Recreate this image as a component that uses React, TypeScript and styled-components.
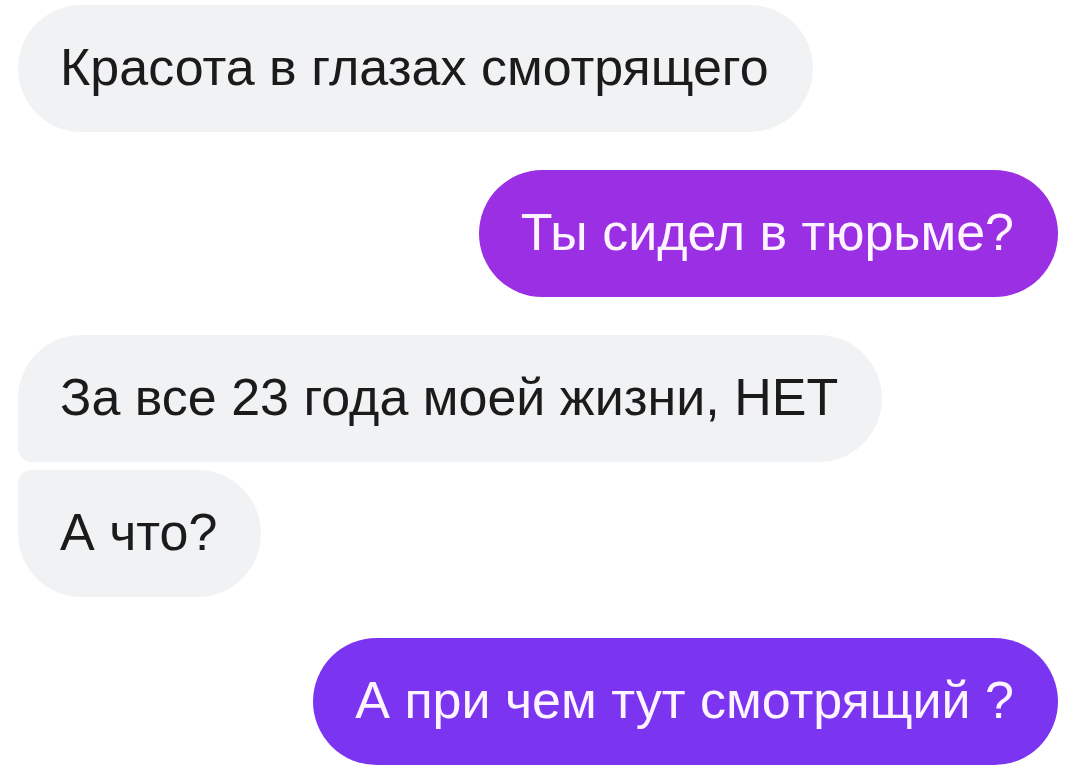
import styled, { createGlobalStyle } from "styled-components";

const Global = createGlobalStyle`
  html, body {
    margin: 0;
    background: #ffffff;
  }
  body {
    font-family: "Liberation Sans", Arial, sans-serif;
  }
`;

const Chat = styled.div`
  display: flex;
  flex-direction: column;
  padding: 5px 22px 0 18px;
  width: 1080px;
  height: 773px;
  box-sizing: border-box;
  overflow: hidden;
`;

const Group = styled.div<{ $mine?: boolean; $space?: number }>`
  display: flex;
  flex-direction: column;
  align-items: ${(p) => (p.$mine ? "flex-end" : "flex-start")};
  gap: 8px;
  margin-bottom: ${(p) => p.$space ?? 38}px;
`;

type Pos = "single" | "first" | "last";

const radius = (pos: Pos) => {
  if (pos === "first") return "64px 64px 64px 14px";
  if (pos === "last") return "14px 64px 64px 64px";
  return "64px";
};

const Bubble = styled.div<{ $mine?: boolean; $tone?: string; $pos?: Pos }>`
  display: flex;
  align-items: center;
  height: 127px;
  box-sizing: border-box;
  padding: 0 44px 4px 42px;
  border-radius: ${(p) => radius(p.$pos || "single")};
  background: ${(p) => (p.$mine ? p.$tone : "#f1f2f4")};
  color: ${(p) => (p.$mine ? "#fdf4ff" : "#1b1b1b")};
  font-size: 52px;
  white-space: nowrap;
`;

export default function App() {
  return (
    <>
      <Global />
      <Chat>
        <Group>
          <Bubble>Красота в глазах смотрящего</Bubble>
        </Group>
        <Group $mine>
          <Bubble $mine $tone="#9a2fe3">
            Ты сидел в тюрьме?
          </Bubble>
        </Group>
        <Group $space={41}>
          <Bubble $pos="first">За все 23 года моей жизни, НЕТ</Bubble>
          <Bubble $pos="last">А что?</Bubble>
        </Group>
        <Group $mine>
          <Bubble $mine $tone="#7b35f1">
            А при чем тут смотрящий ?
          </Bubble>
        </Group>
      </Chat>
    </>
  );
}
